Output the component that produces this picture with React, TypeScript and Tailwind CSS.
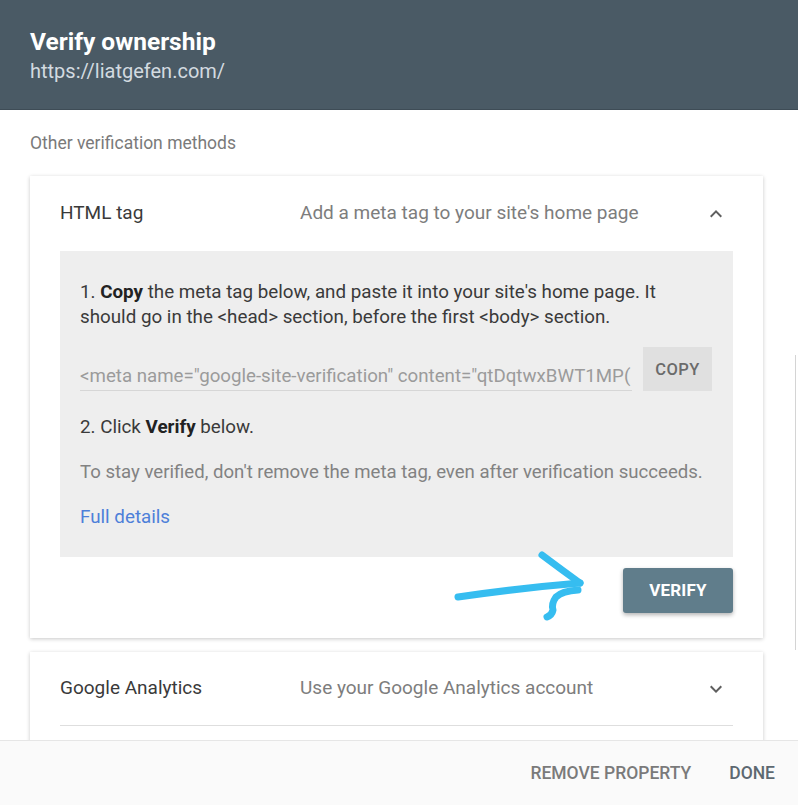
import React from "react";

const ChevronUp = () => (
  <svg width="24" height="24" viewBox="0 0 24 24" className="mr-[5px]">
    <path d="M7.41 15.41L12 10.83l4.59 4.58L18 14l-6-6-6 6z" fill="#5f5f5f" />
  </svg>
);
const ChevronDown = () => (
  <svg width="24" height="24" viewBox="0 0 24 24" className="mr-[5px]">
    <path d="M7.41 8.59L12 13.17l4.59-4.58L18 10l-6 6-6-6z" fill="#5f5f5f" />
  </svg>
);

export default function App() {
  return (
    <div
      className="relative w-[798px] h-[805px] bg-white flex flex-col overflow-hidden"
      style={{ fontFamily: "Roboto, 'Liberation Sans', sans-serif" }}
    >
      <header className="h-[110px] shrink-0 bg-[#4a5a65] border-b border-[#3e4c56] px-[30px] pt-[27px] flex flex-col">
        <div className="text-[24.5px] leading-[30px] font-bold text-white">Verify ownership</div>
        <div className="mt-[2px] text-[20px] leading-[24px] text-[#d3dbe0]">https://liatgefen.com/</div>
      </header>

      <main className="flex-1 overflow-hidden px-[30px] pt-[22px] pr-[35px]">
        <div className="text-[17.5px] leading-[22px] text-[#7a7a7a]">Other verification methods</div>

        <div className="mt-[22px] bg-white shadow-[0_1px_4px_rgba(0,0,0,0.22)] px-[30px] pb-[25px]">
          <div className="h-[75px] flex items-center">
            <div className="w-[240px] text-[19px] text-[#3a3a3a]">HTML tag</div>
            <div className="flex-1 text-[19px] text-[#7d7d7d]">Add a meta tag to your site's home page</div>
            <ChevronUp />
          </div>

          <div className="bg-[#eeeeee] pl-[20px] pr-[21px] pt-[29px] pb-[27px] text-[18.8px] leading-[25px] text-[#3a3a3a]">
            <p>
              1. <b className="text-[#222]">Copy</b> the meta tag below, and paste it into your site's home page. It
              should go in the &lt;head&gt; section, before the first &lt;body&gt; section.
            </p>
            <div className="mt-[17px] h-[44px] flex items-stretch gap-[11px]">
              <div className="flex-1 min-w-0 flex items-end border-b border-[#d6d6d6] pb-[1px] overflow-hidden whitespace-nowrap text-[#9b9b9b] text-[18.7px]">
                &lt;meta name="google-site-verification" content="qtDqtwxBWT1MP(
              </div>
              <div className="w-[69px] bg-[#e0e0e0] flex items-center justify-center text-[16.5px] font-medium tracking-[0.5px] text-[#6b6b6b]">
                COPY
              </div>
            </div>
            <p className="mt-[24px]">
              2. Click <b className="text-[#222]">Verify</b> below.
            </p>
            <p className="mt-[20px] whitespace-nowrap text-[18.6px] text-[#828282]">
              To stay verified, don't remove the meta tag, even after verification succeeds.
            </p>
            <p className="mt-[20px] text-[#4d7fd9]">Full details</p>
          </div>

          <div className="mt-[11px] flex justify-end">
            <div className="w-[110px] h-[45px] rounded-[3px] bg-[#607d8b] shadow-[0_2px_4px_rgba(0,0,0,0.3)] flex items-center justify-center text-white text-[17px] font-bold tracking-[0.2px]">
              VERIFY
            </div>
          </div>
        </div>

        <div className="mt-[14px] bg-white shadow-[0_1px_4px_rgba(0,0,0,0.22)] px-[30px] pb-[20px]">
          <div className="h-[74px] flex items-center border-b border-[#dedede]">
            <div className="w-[240px] text-[19px] text-[#3a3a3a]">Google Analytics</div>
            <div className="flex-1 text-[19px] text-[#7d7d7d]">Use your Google Analytics account</div>
            <ChevronDown />
          </div>
        </div>
      </main>

      <footer className="h-[65px] shrink-0 bg-[#fafafa] border-t border-[#e6e6e6] flex items-center justify-end pr-[23px] gap-[38px] text-[17.5px] font-medium">
        <span className="text-[#7a7a7a]">REMOVE PROPERTY</span>
        <span className="text-[#5d6870]">DONE</span>
      </footer>

      <div className="absolute right-[2px] top-[355px] h-[295px] w-[1px] bg-[#d4d4d4]" />

      <svg className="absolute left-0 top-0 pointer-events-none" width="798" height="805">
        <g stroke="#36bdf0" strokeWidth="7" fill="none" strokeLinecap="round" strokeLinejoin="round">
          <path d="M458 597 Q520 588 580 583" />
          <path d="M542 555 Q562 570 580 583" />
          <path d="M578 590 Q562 591 556 597 Q551 604 553 610 Q552 615 547 617" />
        </g>
      </svg>
    </div>
  );
}
